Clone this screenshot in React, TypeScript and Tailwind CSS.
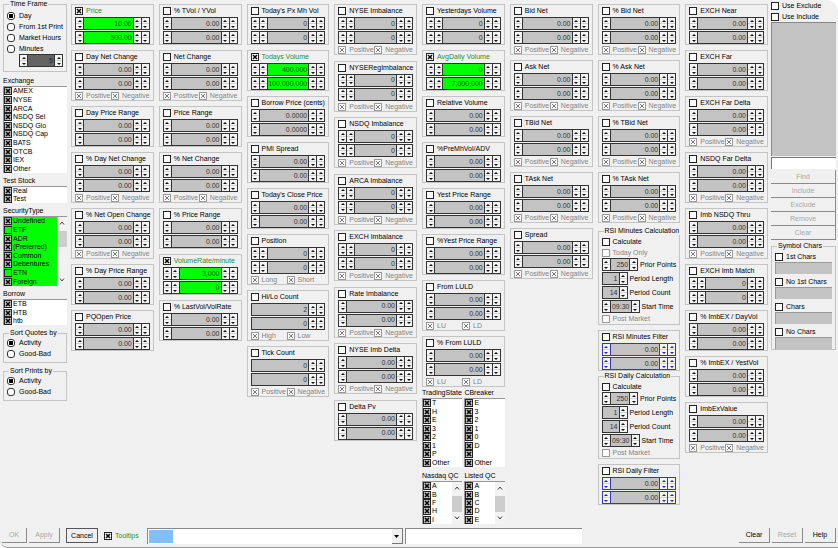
import { ReactNode } from 'react';
import clsx from 'clsx';

type SideLabels = [string, string];

interface FilterDef {
  title: string;
  values?: [string, string];
  // number of spinners on the left of each value
  left?: 0 | 1 | 2;
  sides?: SideLabels;
  active?: boolean;
  blue?: boolean;
}

const PN: SideLabels = ['Positive', 'Negative'];
const INT: [string, string] = ['0', '0'];

const COL_1: FilterDef[] = [
  { title: 'Price', values: ['10.00', '500.00'], active: true },
  { title: 'Day Net Change', sides: PN },
  { title: 'Day Price Range' },
  { title: '% Day Net Change', sides: PN },
  { title: '% Net Open Change', sides: PN },
  { title: '% Day Price Range' },
  { title: 'PQOpen Price' },
];

const COL_2: FilterDef[] = [
  { title: '% TVol / YVol' },
  { title: 'Net Change', sides: PN },
  { title: 'Price Range' },
  { title: '% Net Change', sides: PN },
  { title: '% Price Range' },
  { title: 'VolumeRate/minute', values: ['3,000', '0'], left: 2, active: true },
  { title: '% LastVol/VolRate' },
];

const COL_3: FilterDef[] = [
  { title: "Today's Px Mh Vol", values: INT, left: 2 },
  { title: 'Todays Volume', values: ['400,000', '100,000,000'], left: 2, active: true },
  { title: 'Borrow Price (cents)', values: ['0.0000', '0.0000'] },
  { title: 'PMI Spread' },
  { title: "Today's Close Price" },
  { title: 'Position', values: INT, left: 2, sides: ['Long', 'Short'] },
  { title: 'Hi/Lo Count', values: ['2', '0'], left: 0, sides: ['High', 'Low'] },
  { title: 'Tick Count', values: INT, left: 0, sides: PN },
];

const COL_4: FilterDef[] = [
  { title: 'NYSE Imbalance', values: INT, left: 2, sides: PN },
  { title: 'NYSERegImbalance', values: INT, left: 2, sides: PN },
  { title: 'NSDQ Imbalance', values: INT, left: 2, sides: PN },
  { title: 'ARCA Imbalance', values: INT, left: 2, sides: PN },
  { title: 'EXCH Imbalance', values: INT, left: 2, sides: PN },
  { title: 'Rate Imbalance', sides: PN },
  { title: 'NYSE Imb Delta', sides: PN },
  { title: 'Delta Pv' },
];

const COL_5: FilterDef[] = [
  { title: 'Yesterdays Volume', values: INT, left: 2 },
  { title: 'AvgDaily Volume', values: ['0', '7,000,000'], left: 2, active: true },
  { title: 'Relative Volume' },
  { title: '%PreMhVol/ADV' },
  { title: 'Yest Price Range' },
  { title: '%Yest Price Range' },
  { title: 'From LULD', sides: ['LU', 'LD'] },
  { title: '% From LULD', sides: ['LU', 'LD'] },
];

const COL_6: FilterDef[] = [
  { title: 'Bid Net', sides: PN },
  { title: 'Ask Net', sides: PN },
  { title: 'TBid Net', sides: PN },
  { title: 'TAsk Net', sides: PN },
  { title: 'Spread', sides: PN },
];

const COL_7: FilterDef[] = [
  { title: '% Bid Net', sides: PN },
  { title: '% Ask Net', sides: PN },
  { title: '% TBid Net', sides: PN },
  { title: '% TAsk Net', sides: PN },
];

const COL_8: FilterDef[] = [
  { title: 'EXCH Near' },
  { title: 'EXCH Far' },
  { title: 'EXCH Far Delta', sides: PN },
  { title: 'NSDQ Far Delta', sides: PN },
  { title: 'Imb NSDQ Thru', sides: PN },
  { title: 'EXCH Imb Match', values: INT, left: 2 },
  { title: '% ImbEX / DayVol' },
  { title: '% ImbEX / YestVol' },
  { title: 'ImbExValue', sides: PN },
];

const EXCHANGES = ['AMEX', 'NYSE', 'ARCA', 'NSDQ Sel', 'NSDQ Glo', 'NSDQ Cap', 'BATS', 'OTCB', 'IEX', 'Other'];
const SECURITY_TYPES = ['Undefined', 'ETF', 'ADR', '(Preferred)', 'Common', 'Debentures', 'ETN', 'Foreign'];

interface CheckProps {
  label: string;
  checked?: boolean;
  disabled?: boolean;
  green?: boolean;
  list?: boolean;
}

const Check: React.FC<CheckProps> = ({ label, checked, disabled, green, list }) => (
  <label
    className={clsx(
      'flex min-w-0 items-center whitespace-nowrap',
      list ? 'gap-px' : 'gap-[3px]',
      disabled && 'text-[#858585]',
      green && 'text-[#1f8f2e]',
    )}
  >
    <span className={clsx('grid shrink-0', disabled ? 'text-[#666]' : 'text-black')}>
      <input
        type="checkbox"
        defaultChecked={checked}
        disabled={disabled}
        aria-label={label || 'Blank'}
        className={clsx(
          'peer col-start-1 row-start-1 size-2 appearance-none border',
          disabled ? 'border-[#999]' : 'border-[#222]',
          list ? (checked ? 'bg-[#c3c3c3]' : 'bg-transparent') : 'bg-white',
        )}
      />
      <svg
        viewBox="0 0 8 8"
        className="pointer-events-none invisible col-start-1 row-start-1 size-2 peer-checked:visible"
      >
        <path
          d="M2 2L6 6M6 2L2 6"
          stroke="currentColor"
          strokeWidth={disabled ? 0.9 : 1.5}
        />
      </svg>
    </span>
    <span>{label}</span>
  </label>
);

interface RadioProps {
  name: string;
  label: string;
  checked?: boolean;
}

const Radio: React.FC<RadioProps> = ({ name, label, checked }) => (
  <label className="flex h-[11px] items-center gap-1 whitespace-nowrap">
    <span className="grid shrink-0 place-items-center">
      <input
        type="radio"
        name={name}
        defaultChecked={checked}
        className="peer col-start-1 row-start-1 size-2 appearance-none rounded-[3px] border border-[#333] bg-white"
      />
      <span className="pointer-events-none invisible col-start-1 row-start-1 size-1 bg-black peer-checked:visible" />
    </span>
    {label}
  </label>
);

const Spin: React.FC<{ label: string }> = ({ label }) => (
  <span className="flex w-[7px] shrink-0 flex-col bg-[#f4f4f4]">
    <button
      type="button"
      aria-label={`${label} up`}
      className="flex flex-1 items-center justify-center border-b border-[#d4d4d4]"
    >
      <svg viewBox="0 0 4 2" className="h-0.5 w-1">
        <path
          d="M2 0L4 2H0Z"
          fill="currentColor"
        />
      </svg>
    </button>
    <button
      type="button"
      aria-label={`${label} down`}
      className="flex flex-1 items-center justify-center"
    >
      <svg viewBox="0 0 4 2" className="h-0.5 w-1">
        <path
          d="M0 0H4L2 2Z"
          fill="currentColor"
        />
      </svg>
    </button>
  </span>
);

interface SpinFieldProps {
  label: string;
  value: string;
  left?: number;
  right?: number;
  active?: boolean;
  blue?: boolean;
  dark?: boolean;
  className?: string;
}

const SpinField: React.FC<SpinFieldProps> = ({
  label,
  value,
  left = 1,
  right = 2,
  active,
  blue,
  dark,
  className,
}) => (
  <div
    className={clsx(
      'flex h-[13px] divide-x border',
      blue
        ? 'divide-[#3a35b0] border-[#3a35b0] text-[#2a259c]'
        : 'divide-[#333] border-[#333] text-[#111]',
      className,
    )}
  >
    {Array.from({ length: left }, (_, i) => (
      <span key={i} className="flex">
        <Spin label={`${label} step ${i + 1}`} />
      </span>
    ))}
    <input
      type="text"
      aria-label={label}
      defaultValue={value}
      className={clsx(
        'w-full min-w-0 flex-1 pr-px text-right',
        active && 'bg-[#00ff00] text-[#0c5a10]',
        dark && 'bg-[#646464] text-[#222]',
        !active && !dark && 'bg-[#c3c3c3] text-[#333]',
      )}
    />
    {Array.from({ length: right }, (_, i) => (
      <span key={i} className="flex">
        <Spin label={`${label} fine step ${i + 1}`} />
      </span>
    ))}
  </div>
);

const FilterBox: React.FC<{ data: FilterDef }> = ({ data }) => {
  const { title, values = ['0.00', '0.00'], left = 1, sides, active, blue } = data;
  return (
    <section className="border border-[#c4c4c4] px-[3px]">
      <div className="flex h-3 items-center">
        <Check
          label={title}
          checked={active}
          green={active}
        />
      </div>
      <div className="flex flex-col gap-px">
        {values.map((value, i) => (
          <SpinField
            key={i}
            label={`${title} ${i === 0 ? 'from' : 'to'}`}
            value={value}
            left={left}
            active={active}
            blue={blue}
          />
        ))}
      </div>
      {sides && (
        <div className="grid h-[10px] grid-cols-[36px_1fr] items-center pt-px">
          {sides.map((side) => (
            <Check
              key={side}
              label={side}
              checked
              disabled
            />
          ))}
        </div>
      )}
    </section>
  );
};

interface ColumnProps {
  filters: FilterDef[];
  className?: string;
}

const Column: React.FC<ColumnProps> = ({ filters, className }) => (
  <div className={clsx('flex min-w-0 flex-col justify-between gap-[5px]', className)}>
    {filters.map((filter) => (
      <FilterBox
        key={filter.title}
        data={filter}
      />
    ))}
  </div>
);

interface GroupProps {
  title: string;
  className?: string;
  children: ReactNode;
}

const Group: React.FC<GroupProps> = ({ title, className, children }) => (
  <fieldset className={clsx('min-w-0 border border-[#c4c4c4] px-[3px]', className)}>
    <legend className="ml-0.5 h-2 px-px leading-2 whitespace-nowrap">{title}</legend>
    {children}
  </fieldset>
);

interface CheckListProps {
  title: string;
  items: string[];
  unchecked?: string[];
  scroll?: boolean;
  green?: boolean;
  // height of the visible rows
  height: string;
}

const CheckList: React.FC<CheckListProps> = ({ title, items, unchecked = [], scroll, green, height }) => (
  <section className="min-w-0">
    <h2 className="h-[10px] leading-[10px] whitespace-nowrap">{title}</h2>
    <div className={clsx('flex border-t border-l border-[#999] bg-white', height)}>
      <ul className={clsx('grid min-w-0 flex-1 auto-rows-fr', green && 'bg-[#00ff00]')}>
        {items.map((item, i) => (
          <li
            key={i}
            className="flex min-h-0 items-center"
          >
            <Check
              label={item}
              checked={!unchecked.includes(item)}
              list
            />
          </li>
        ))}
      </ul>
      {scroll && (
        <div className="flex w-[10px] shrink-0 flex-col items-center bg-[#f2f2f2] py-0.5">
          <svg viewBox="0 0 6 4" className="my-0.5 h-1 w-1.5">
            <path d="M1 3.5L3 1L5 3.5" fill="none" stroke="#444" />
          </svg>
          <div className="mt-1 max-h-4 min-h-0 w-full flex-1 bg-[#cdcdcd]" />
          <svg viewBox="0 0 6 4" className="mt-auto mb-0.5 h-1 w-1.5">
            <path d="M1 0.5L3 3L5 0.5" fill="none" stroke="#444" />
          </svg>
        </div>
      )}
    </div>
  </section>
);

interface RsiGroupProps {
  title: string;
  todayOnly?: boolean;
  className: string;
}

const RsiGroup: React.FC<RsiGroupProps> = ({ title, todayOnly, className }) => (
  <Group
    title={title}
    className={className}
  >
    <div className="grid auto-rows-[11px] items-center pt-px">
      <Check label="Calculate" />
      {todayOnly && (
        <Check
          label="Today Only"
          disabled
        />
      )}
    </div>
    <div className="flex flex-col gap-px">
      <div className="flex items-center gap-0.5 whitespace-nowrap">
        <SpinField label={`${title} prior points`} value="250" right={1} className="w-[38px]" />
        Prior Points
      </div>
      <div className="flex items-center gap-0.5 whitespace-nowrap">
        <SpinField label={`${title} period length`} value="1" left={0} right={1} className="w-[26px]" />
        Period Length
      </div>
      <div className="flex items-center gap-0.5 whitespace-nowrap">
        <SpinField label={`${title} period count`} value="14" left={0} right={1} className="w-[26px]" />
        Period Count
      </div>
      <div className="flex items-center gap-0.5 whitespace-nowrap">
        <SpinField label={`${title} start time`} value="09:30" right={1} className="w-[38px]" />
        Start Time
      </div>
    </div>
    <div className="flex h-[11px] items-center pt-px">
      <Check
        label="Post Market"
        disabled
      />
    </div>
  </Group>
);

interface PushButtonProps {
  children: ReactNode;
  disabled?: boolean;
  framed?: boolean;
  className?: string;
}

const PushButton: React.FC<PushButtonProps> = ({ children, disabled, framed, className }) => (
  <button
    type="button"
    disabled={disabled}
    className={clsx(
      'border-r border-b border-[#8a8a8a] bg-[#f0f0f0] text-center',
      disabled && 'text-[#a8a8a8]',
      framed && 'border-t border-l border-[#555]',
      className,
    )}
  >
    {children}
  </button>
);

export default function App() {
  return (
    <div className="bg-white font-['Liberation_Sans',Arial,sans-serif] text-[7px] leading-[10px] text-black">
      <div className="flex min-h-screen flex-col rounded-tr-xl rounded-bl-lg border-b border-[#999] bg-[#f0f0f0]">
        <main className="flex gap-[3px] pr-0.5 pl-[3px]">
          <aside className="flex w-16 shrink-0 flex-col">
            <Group title="Time Frame" className="h-[72px]">
              <div className="pt-0.5">
                <Radio name="frame" label="Day" checked />
                <Radio name="frame" label="From 1st Print" />
                <Radio name="frame" label="Market Hours" />
                <Radio name="frame" label="Minutes" />
              </div>
              <SpinField label="Minutes" value="5" right={1} dark className="ml-3" />
            </Group>
            <div className="mt-1 flex flex-col gap-[3px]">
              <CheckList title="Exchange" items={EXCHANGES} height="h-[87px]" />
              <CheckList title="Test Stock" items={['Real', 'Test']} height="h-[17px]" />
              <CheckList
                title="SecurityType"
                items={SECURITY_TYPES}
                unchecked={['ETF', 'ETN']}
                scroll
                green
                height="h-[70px]"
              />
              <CheckList title="Borrow" items={['ETB', 'HTB', 'htb']} height="h-[26px]" />
            </div>
            <div className="mt-1 flex flex-col gap-1">
              <Group title="Sort Quotes by" className="h-[34px]">
                <Radio name="quotes" label="Activity" checked />
                <Radio name="quotes" label="Good-Bad" />
              </Group>
              <Group title="Sort Prints by" className="h-[34px]">
                <Radio name="prints" label="Activity" checked />
                <Radio name="prints" label="Good-Bad" />
              </Group>
            </div>
          </aside>

          <div className="grid min-w-0 flex-1 grid-cols-8 items-start gap-[5px] pt-1 pl-px">
            <Column filters={COL_1} />
            <Column filters={COL_2} />
            <Column filters={COL_3} />
            <Column filters={COL_4} className="min-h-[437px]" />
            <div className="min-w-0">
              <Column filters={COL_5} />
              <div className="grid grid-cols-2 gap-x-0.5 gap-y-1 pt-px">
                <CheckList
                  title="TradingState"
                  items={['T', 'H', 'E', '3', '2', '1', 'P', 'Other']}
                  height="h-[69px]"
                />
                <CheckList
                  title="CBreaker"
                  items={['E', '3', '2', '1', '0', 'D', '', 'Other']}
                  height="h-[69px]"
                />
                <CheckList title="Nasdaq QC" items={['A', 'B', 'F', 'H', 'I']} scroll height="h-[43px]" />
                <CheckList title="Listed QC" items={['A', 'B', 'C', 'D', 'E']} scroll height="h-[43px]" />
              </div>
            </div>
            <Column filters={COL_6} />
            <div className="flex min-w-0 flex-col gap-[5px]">
              <Column filters={COL_7} />
              <RsiGroup title="RSI Minutes Calculation" todayOnly className="-mt-px" />
              <FilterBox data={{ title: 'RSI Minutes Filter', blue: true }} />
              <RsiGroup title="RSI Daily Calculation" className="-mt-1" />
              <FilterBox data={{ title: 'RSI Daily Filter', blue: true }} />
            </div>
            <Column filters={COL_8} />
          </div>

          <aside className="flex w-[65px] shrink-0 flex-col">
            <div className="grid h-[22px] auto-rows-[11px] items-center">
              <Check label="Use Exclude" />
              <Check label="Use Include" />
            </div>
            <div className="h-[134px] border-t border-l border-[#888] bg-[#c3c3c3]" />
            <input
              type="text"
              aria-label="Symbol"
              className="mt-px h-3 w-full border-t border-l border-[#777] bg-white px-0.5"
            />
            <div className="mt-px grid auto-rows-[14px]">
              {['Find', 'Include', 'Exclude', 'Remove', 'Clear'].map((name) => (
                <PushButton
                  key={name}
                  disabled
                >
                  {name}
                </PushButton>
              ))}
            </div>
            <Group title="Symbol Chars" className="mt-0.5">
              <div className="flex flex-col gap-0.5 pt-px">
                {['1st Chars', 'No 1st Chars', 'Chars', 'No Chars'].map((name) => (
                  <div key={name}>
                    <div className="flex h-[11px] items-center">
                      <Check label={name} />
                    </div>
                    <input
                      type="text"
                      aria-label={`${name} value`}
                      className="block h-3 w-full border-t border-l border-[#999] bg-[#c3c3c3] px-0.5"
                    />
                  </div>
                ))}
              </div>
            </Group>
          </aside>
        </main>

        <footer className="mt-auto flex h-[19px] items-start pr-0.5 pl-0.5">
          <PushButton disabled className="h-[15px] w-[25px]">OK</PushButton>
          <PushButton disabled className="ml-0.5 h-[15px] w-[31px]">Apply</PushButton>
          <PushButton framed className="ml-1.5 h-[15px] w-8">Cancel</PushButton>
          <div className="ml-1.5 flex h-[15px] items-center">
            <Check label="Tooltips" checked green />
          </div>
          <div className="ml-2 flex min-w-0 flex-1 gap-0.5">
            <div className="flex h-4 flex-[258] border-t border-l border-[#888] bg-white">
              <span className="m-px w-6 bg-[#7fbfff]" />
              <input type="text" aria-label="Preset" className="min-w-0 flex-1 px-0.5" />
              <button
                type="button"
                aria-label="Open preset list"
                className="flex w-[11px] items-center justify-center border-r border-b border-[#777] bg-[#f0f0f0]"
              >
                <svg viewBox="0 0 5 3" className="h-[3px] w-[5px]">
                  <path d="M0 0H5L2.5 3Z" fill="#000" />
                </svg>
              </button>
            </div>
            <input
              type="text"
              aria-label="Preset name"
              className="h-4 min-w-0 flex-[174] border-t border-l border-[#888] bg-white px-0.5"
            />
            <div className="flex-[157]" />
          </div>
          <div className="flex gap-0.5">
            <PushButton className="h-[15px] w-[31px]">Clear</PushButton>
            <PushButton disabled className="h-[15px] w-[31px]">Reset</PushButton>
            <PushButton className="h-[15px] w-[31px]">Help</PushButton>
          </div>
        </footer>
      </div>
    </div>
  );
}
